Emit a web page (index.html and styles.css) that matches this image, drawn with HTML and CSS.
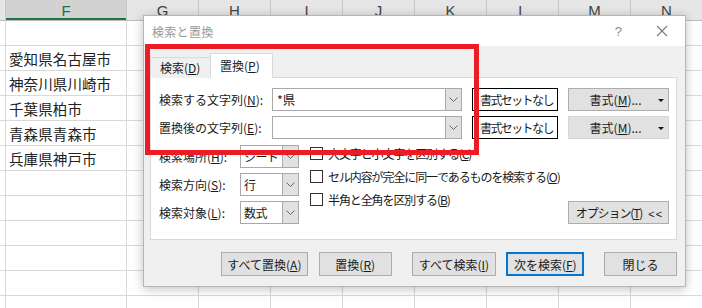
FILE: index.html
```html
<!DOCTYPE html>
<html lang="ja">
<head>
    <meta charset="UTF-8">
    <title>検索と置換</title>
    <link rel="stylesheet" href="styles.css">
</head>
<body>
<div class="sheet">
    <div class="col-heads">
        <div class="head stub"></div>
        <div class="head head-f selected">F</div>
        <div class="head">G</div>
        <div class="head">H</div>
        <div class="head">I</div>
        <div class="head">J</div>
        <div class="head">K</div>
        <div class="head">L</div>
        <div class="head">M</div>
        <div class="head">N</div>
    </div>
    <div class="cols">
        <div class="col stub"></div>
        <div class="col col-f">
            <div class="cell"></div>
            <div class="cell">愛知県名古屋市</div>
            <div class="cell">神奈川県川崎市</div>
            <div class="cell">千葉県柏市</div>
            <div class="cell">青森県青森市</div>
            <div class="cell">兵庫県神戸市</div>
        </div>
        <div class="col"></div>
        <div class="col"></div>
        <div class="col"></div>
        <div class="col"></div>
        <div class="col"></div>
        <div class="col"></div>
        <div class="col"></div>
        <div class="col"></div>
    </div>
</div>

<div class="dialog">
    <div class="titlebar">
        <span class="title">検索と置換</span>
        <span class="help">?</span>
        <svg class="close" width="12" height="12" viewBox="0 0 12 12"><path d="M1 1L11 11M11 1L1 11" stroke="#7a7a7a" stroke-width="1.1"/></svg>
    </div>
    <div class="dialog-body">
        <div class="tabs">
            <div class="tab">検索(<u>D</u>)</div>
            <div class="tab active">置換(<u>P</u>)</div>
        </div>
        <div class="panel">
            <div class="find-row">
                <label class="find-label">検索する文字列(<u>N</u>):</label>
                <div class="combo wide">
                    <span class="combo-text">*県</span>
                    <span class="drop"><svg width="9" height="5" viewBox="0 0 9 5"><path d="M0.5 0.5L4.5 4.5L8.5 0.5" fill="none" stroke="#666"/></svg></span>
                </div>
                <div class="fmt-preview">書式セットなし</div>
                <button class="btn fmt-btn">書式(<u>M</u>)...<span class="caret"></span></button>
            </div>
            <div class="find-row">
                <label class="find-label">置換後の文字列(<u>E</u>):</label>
                <div class="combo wide">
                    <span class="combo-text"></span>
                    <span class="drop"><svg width="9" height="5" viewBox="0 0 9 5"><path d="M0.5 0.5L4.5 4.5L8.5 0.5" fill="none" stroke="#666"/></svg></span>
                </div>
                <div class="fmt-preview">書式セットなし</div>
                <button class="btn fmt-btn light">書式(<u>M</u>)...<span class="caret"></span></button>
            </div>

            <div class="options">
                <div class="selects">
                    <div class="opt-row">
                        <label class="opt-label">検索場所(<u>H</u>):</label>
                        <div class="combo small">
                            <span class="combo-text">シート</span>
                            <span class="drop"><svg width="9" height="5" viewBox="0 0 9 5"><path d="M0.5 0.5L4.5 4.5L8.5 0.5" fill="none" stroke="#666"/></svg></span>
                        </div>
                    </div>
                    <div class="opt-row">
                        <label class="opt-label">検索方向(<u>S</u>):</label>
                        <div class="combo small">
                            <span class="combo-text">行</span>
                            <span class="drop"><svg width="9" height="5" viewBox="0 0 9 5"><path d="M0.5 0.5L4.5 4.5L8.5 0.5" fill="none" stroke="#666"/></svg></span>
                        </div>
                    </div>
                    <div class="opt-row">
                        <label class="opt-label">検索対象(<u>L</u>):</label>
                        <div class="combo small">
                            <span class="combo-text">数式</span>
                            <span class="drop"><svg width="9" height="5" viewBox="0 0 9 5"><path d="M0.5 0.5L4.5 4.5L8.5 0.5" fill="none" stroke="#666"/></svg></span>
                        </div>
                    </div>
                </div>
                <div class="checks">
                    <div class="check"><span class="box"></span>大文字と小文字を区別する(<u>C</u>)</div>
                    <div class="check"><span class="box"></span>セル内容が完全に同一であるものを検索する(<u>O</u>)</div>
                    <div class="check"><span class="box"></span>半角と全角を区別する(<u>B</u>)</div>
                </div>
                <button class="btn opt-btn">オプション(<u>T</u>)<span class="chev">&lt;&lt;</span></button>
            </div>
        </div>

        <div class="actions">
            <button class="btn replace-all">すべて置換(<u>A</u>)</button>
            <button class="btn replace">置換(<u>R</u>)</button>
            <button class="btn find-all">すべて検索(<u>I</u>)</button>
            <button class="btn find-next">次を検索(<u>F</u>)</button>
            <button class="btn close-btn">閉じる</button>
        </div>
    </div>
    <div class="highlight"></div>
</div>
</body>
</html>
```

FILE: styles.css
```css
html, body {
    margin: 0;
    padding: 0;
}

body {
    width: 702px;
    height: 308px;
    overflow: hidden;
    position: relative;
    background: #fff;
    font-family: "Noto Sans CJK JP", "Noto Sans", sans-serif;
}

/* sheet behind the dialog */
.sheet {
    width: 702px;
}

.col-heads {
    display: flex;
    height: 20px;
    background: #e6e6e6;
    border-bottom: 1px solid #bcbcbc;
}

.head {
    width: 71px;
    flex: none;
    border-right: 1px solid #c8c8c8;
    text-align: center;
    font-family: "Liberation Sans", sans-serif;
    font-size: 15px;
    line-height: 22px;
    color: #444;
}

.head.stub {
    width: 5px;
}

.head.head-f {
    width: 120px;
}

.head.selected {
    background: #d2d2d2;
    color: #217346;
    box-shadow: inset 0 -2px 0 #217346;
}

.cols {
    display: flex;
    height: 287px;
    background: repeating-linear-gradient(to bottom, transparent 0 24px, #d9d9d9 24px 25px);
}

.col {
    width: 71px;
    flex: none;
    border-right: 1px solid #d9d9d9;
}

.col.stub {
    width: 5px;
}

.col.col-f {
    width: 120px;
}

.cell {
    height: 25px;
    padding-left: 3px;
    font-size: 14.5px;
    letter-spacing: 0.1px;
    line-height: 25px;
    color: #222;
    white-space: nowrap;
}

/* dialog */
.dialog {
    position: absolute;
    left: 143px;
    top: 15px;
    width: 541px;
    height: 270px;
    border: 1px solid #b5b5b5;
    background: #f0f0f0;
    box-shadow: 0 2px 10px rgba(0, 0, 0, 0.25);
    font-size: 12px;
    color: #1a1a1a;
}

.titlebar {
    height: 30px;
    background: #fff;
    display: flex;
    align-items: center;
    padding-left: 8px;
}

.title {
    color: #9a9a9a;
    font-size: 12px;
    letter-spacing: 0.3px;
    flex: 1;
}

.help {
    color: #8a8a8a;
    font-family: "Liberation Sans", sans-serif;
    font-size: 13px;
    margin-right: 34px;
}

.close {
    margin-right: 17px;
}

.dialog-body {
    padding: 8px 8px 0 6px;
}

.tabs {
    display: flex;
    align-items: flex-end;
    height: 24px;
    position: relative;
    z-index: 1;
}

.tab {
    height: 20px;
    line-height: 20px;
    padding: 0 7px 0 9px;
    width: 43px;
    border: 1px solid #d9d9d9;
    border-bottom: none;
    background: #f0f0f0;
}

.tab.active {
    height: 24px;
    line-height: 24px;
    width: 45px;
    padding: 0 7px 0 9px;
    background: #fff;
    margin-left: -1px;
}

.panel {
    height: 151px;
    border: 1px solid #d9d9d9;
    background: #fff;
    padding: 10px 7px 0 8px;
    margin-top: -1px;
}

.find-row {
    display: flex;
    align-items: center;
    height: 23px;
    margin-bottom: 5px;
}

.find-label {
    width: 113px;
    flex: none;
}

.combo {
    display: flex;
    height: 21px;
    border: 1px solid #a9a9a9;
    background: #fff;
    flex: none;
}

.combo.wide {
    width: 188px;
}

.combo.small {
    width: 57px;
}

.combo-text {
    flex: 1;
    padding-left: 4px;
    line-height: 21px;
    font-size: 12.5px;
    white-space: nowrap;
    overflow: hidden;
}

.combo.small .combo-text {
    padding-left: 3px;
    font-size: 12px;
    letter-spacing: -0.6px;
}

.drop {
    width: 15px;
    flex: none;
    border-left: 1px solid #a9a9a9;
    background: #e1e1e1;
    display: flex;
    align-items: center;
    justify-content: center;
}

.fmt-preview {
    margin-left: 10px;
    width: 78px;
    height: 21px;
    border: 1px solid #000;
    background: #fff;
    line-height: 21px;
    padding-left: 7px;
    box-sizing: content-box;
    white-space: nowrap;
    overflow: hidden;
    font-size: 12px;
    letter-spacing: -1.6px;
}

.btn {
    font-family: inherit;
    font-size: 12px;
    color: #1a1a1a;
    background: #e1e1e1;
    border: 1px solid #adadad;
    height: 24px;
    padding: 0;
    box-sizing: border-box;
    white-space: nowrap;
}

.fmt-btn {
    margin-left: 10px;
    width: 102px;
    height: 23px;
    position: relative;
    text-align: center;
    padding-right: 6px;
}

.fmt-btn.light {
    border-color: #d6d6d6;
}

.caret {
    position: absolute;
    right: 4px;
    top: 10px;
    border-left: 3px solid transparent;
    border-right: 3px solid transparent;
    border-top: 3px solid #111;
}

.options {
    display: flex;
    margin-top: 6px;
}

.selects {
    display: flex;
    flex-direction: column;
    gap: 5px;
}

.opt-row {
    display: flex;
    align-items: center;
    height: 23px;
}

.opt-label {
    width: 81px;
    flex: none;
    white-space: nowrap;
}

.checks {
    margin-left: 11px;
    display: flex;
    flex-direction: column;
    margin-top: -3px;
}

.check {
    display: flex;
    align-items: center;
    height: 23px;
    white-space: nowrap;
    letter-spacing: -1.1px;
}

.box {
    width: 11px;
    height: 11px;
    border: 1px solid #333;
    background: #fff;
    margin-right: 5px;
}

.opt-btn {
    margin-left: auto;
    align-self: flex-end;
    width: 101px;
    height: 23px;
    letter-spacing: -1.1px;
    padding-left: 2px;
}

.chev {
    margin-left: 6px;
    letter-spacing: 1px;
    font-family: "Liberation Sans", sans-serif;
    font-size: 11px;
}

.actions {
    display: flex;
    margin-top: 12px;
    padding-left: 71px;
}

.replace-all {
    width: 87px;
}

.replace {
    width: 73px;
    margin-left: 11px;
}

.find-all {
    width: 85px;
    margin-left: 20px;
}

.find-next {
    width: 78px;
    margin-left: 10px;
    border: 2px solid #0078d7;
}

.close-btn {
    width: 73px;
    margin-left: 20px;
}

/* red annotation frame drawn over the dialog */
.highlight {
    position: absolute;
    left: 1px;
    top: 28px;
    width: 324px;
    height: 101px;
    border: 5px solid #ed1c24;
    z-index: 5;
}
```
